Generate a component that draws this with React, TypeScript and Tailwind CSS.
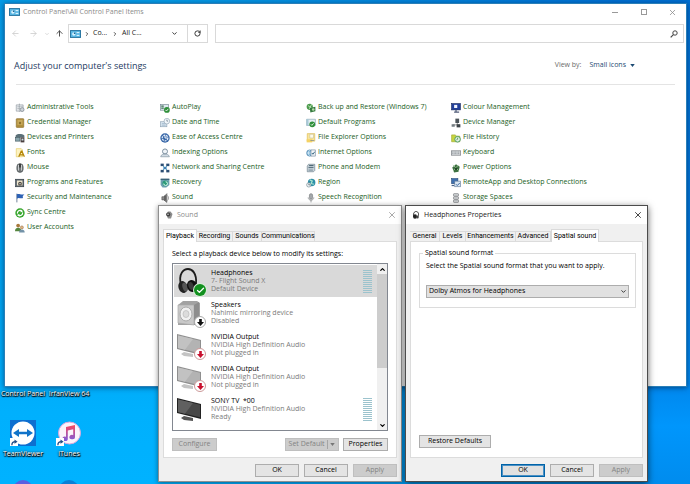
import type { ReactNode } from "react";
import { ArrowLeft, ArrowRight, ArrowUp, Check, ChevronDown, ChevronRight, ChevronUp, RotateCw, X } from "lucide-react";

/* ---------- small icons for the control panel list ---------- */

const G = ({ children }: { children: ReactNode }) => (
  <svg viewBox="0 0 16 16" className="size-[10px] shrink-0" aria-hidden="true">
    {children}
  </svg>
);

const Tick = ({ x = 11, y = 11 }: { x?: number; y?: number }) => (
  <g>
    <circle cx={x} cy={y} r="4.6" fill="#2f8f3a" />
    <path d={`M${x - 2.2} ${y}l1.6 1.8l2.8-3.4`} fill="none" stroke="#fff" strokeWidth="1.3" />
  </g>
);

const icons: Record<string, ReactNode> = {
  admin: (
    <G>
      <path d="M2 3h11v10H2z" fill="#e8ebee" stroke="#8a949c" />
      <path d="M4 6h8M4 9h8M7 1v13" stroke="#7d868d" strokeDasharray="2 1" />
      <circle cx="11.500" cy="10.500" r="3" fill="#cfd5da" stroke="#77818a" />
    </G>
  ),
  credential: (
    <G>
      <rect x="2" y="1" width="12" height="14" rx="1" fill="#b08f3e" stroke="#8b6d26" />
      <rect x="4" y="3" width="8" height="8" fill="#c9ab5d" />
      <circle cx="8" cy="8" r="2" fill="#8e732f" />
    </G>
  ),
  devices: (
    <G>
      <path d="M1 4c3-3 10-3 14 0v3H1z" fill="#5b7078" />
      <rect x="1" y="7" width="7" height="6" fill="#8aa6ad" stroke="#3f555d" />
      <rect x="9" y="7" width="6" height="8" fill="#4a3f3f" />
      <rect x="10.500" y="9" width="3" height="3" fill="#c9dde2" />
    </G>
  ),
  fonts: (
    <G>
      <path d="M2 1h8l2 2v11H2z" fill="#fdf3c1" stroke="#e2c75c" />
      <path d="M6 14l4-9h1l4 9M7.500 11h6" fill="none" stroke="#b48609" strokeWidth="2" />
    </G>
  ),
  mouse: (
    <G>
      <rect x="3" y="1" width="10" height="14" rx="5" fill="#707678" stroke="#43494b" />
      <path d="M5.500 3v9M10.500 3v9" stroke="#d5d9da" strokeWidth="1.500" />
      <path d="M8 1v6" stroke="#222" strokeWidth="2" />
    </G>
  ),
  programs: (
    <G>
      <rect x="1" y="2" width="13" height="12" fill="#55606a" stroke="#2f3940" />
      <rect x="3" y="4" width="9" height="8" fill="#efe7cf" />
      <circle cx="8" cy="9" r="3" fill="#4f4a42" />
      <circle cx="8" cy="9" r="1" fill="#fff" />
    </G>
  ),
  security: (
    <G>
      <path d="M3 1v14" stroke="#6b7d94" strokeWidth="1.500" />
      <path d="M3 2c4-2 6 2 12 0c-3 3-3 4-2 6c-5 2-6-2-10 1z" fill="#2d62b5" />
    </G>
  ),
  sync: (
    <G>
      <circle cx="8" cy="8" r="7.500" fill="#35a52b" />
      <path d="M4 9a4 4 0 0 1 6-4.500M12 7a4 4 0 0 1-6 4.500" fill="none" stroke="#fff" strokeWidth="2" />
      <path d="M9 2l4 3l-4 2zM7 14l-4-3l4-2z" fill="#fff" />
    </G>
  ),
  users: (
    <G>
      <circle cx="5" cy="4" r="3" fill="#a8793c" />
      <path d="M0 13c0-7 10-7 10 0z" fill="#55863f" />
      <circle cx="11" cy="7" r="2.500" fill="#dfb180" stroke="#7a5a35" strokeWidth="0.600" />
      <path d="M6.500 15c0-6 9-6 9 0z" fill="#7392a8" />
    </G>
  ),
  autoplay: (
    <G>
      <rect x="0.500" y="2.500" width="13" height="9" fill="#dfe9ef" stroke="#70838f" />
      <path d="M2 5h4M2 8h4" stroke="#3b6d50" strokeWidth="2" />
      <Tick />
    </G>
  ),
  date: (
    <G>
      <rect x="1" y="6" width="10" height="8" fill="#d6e4ef" stroke="#8aa0b2" />
      <path d="M3 9h6M3 11.500h6" stroke="#8fa9bd" />
      <circle cx="11" cy="5" r="4.500" fill="#f1f6fa" stroke="#8ba1b0" />
      <path d="M11 2.500V5h2" fill="none" stroke="#55697a" />
    </G>
  ),
  ease: (
    <G>
      <circle cx="8" cy="8" r="7.500" fill="#3a68a8" />
      <circle cx="8" cy="8" r="4.500" fill="none" stroke="#e7f0fa" strokeWidth="2" strokeDasharray="3 1.500" />
      <path d="M8 4v4h4" fill="none" stroke="#fff" strokeWidth="1.500" />
    </G>
  ),
  indexing: (
    <G>
      <circle cx="8" cy="5.500" r="4" fill="#eef3f7" stroke="#75899a" strokeWidth="1.500" />
      <path d="M1 14c1-4 4-4 7-4s6 0 7 4z" fill="#d2dce5" stroke="#7a8d9c" />
    </G>
  ),
  network: (
    <G>
      <path d="M4 4l8 8M12 4l-8 8" stroke="#56b1c9" strokeWidth="1.500" />
      <rect x="1" y="1" width="5" height="4" fill="#2b4e74" />
      <rect x="10" y="1" width="5" height="4" fill="#2b4e74" />
      <rect x="5.500" y="6" width="5" height="4" fill="#3d7fb5" />
      <rect x="1" y="11" width="5" height="4" fill="#2b4e74" />
      <rect x="10" y="11" width="5" height="4" fill="#2b4e74" />
    </G>
  ),
  recovery: (
    <G>
      <path d="M1 2h14v9l-5 4H4l-3-4z" fill="#6c9fb0" />
      <circle cx="8.500" cy="8.500" r="4.500" fill="#2b9a77" />
      <path d="M6 9a3 3 0 1 0 3-3" fill="none" stroke="#e3fff5" strokeWidth="1.500" />
      <path d="M1 2h14" stroke="#2c566c" strokeWidth="2" />
    </G>
  ),
  sound: (
    <G>
      <path d="M3 6h3l5-5v14l-5-4H3z" fill="#8d8d8d" stroke="#555" />
      <path d="M12 4c2 2 2 6 0 8" fill="none" stroke="#999" strokeWidth="1.500" />
      <path d="M8 4v8" stroke="#333" strokeWidth="1.500" />
    </G>
  ),
  backup: (
    <G>
      <circle cx="6" cy="6" r="5" fill="#4b9b4b" />
      <path d="M3 4l7 5M9 2l-4 8" stroke="#d5f0d0" strokeWidth="1.200" />
      <path d="M6 8l9-2v7l-8 2z" fill="#367c41" />
      <circle cx="11.500" cy="10.500" r="2" fill="#b4dba8" />
    </G>
  ),
  defaults: (
    <G>
      <path d="M1 2h14v10H1z" fill="#e6eff4" stroke="#7ea0af" />
      <path d="M1 2h3v10H1z" fill="#a7c9d6" />
      <Tick x={10} y={10} />
    </G>
  ),
  explorer: (
    <G>
      <path d="M2 1h12v12H2z" fill="#f9e59a" stroke="#dcb94b" />
      <path d="M6 2h6v6H6z" fill="#fffbe8" stroke="#c9c19a" />
      <path d="M1 10h9v5H1z" fill="#f4d264" />
      <path d="M7 12h6" stroke="#6d8296" />
    </G>
  ),
  internet: (
    <G>
      <circle cx="6" cy="8" r="5" fill="#7fb5d7" stroke="#3d77a3" />
      <path d="M1 8h10M6 3c-3 3-3 7 0 10" stroke="#e9f5fc" fill="none" />
      <path d="M8 3h7v10H8z" fill="#f0f4f7" stroke="#72889a" />
      <path d="M9.500 8l1.500 2l3-4" stroke="#31627f" fill="none" strokeWidth="1.500" />
    </G>
  ),
  phone: (
    <G>
      <path d="M2 5l2-3h10v10l-2 2H2z" fill="#c8d3da" stroke="#687b87" />
      <path d="M5 4h7M4 7h8" stroke="#48626f" strokeWidth="1.500" />
      <path d="M4 10h7M4 12h7" stroke="#7c919d" />
    </G>
  ),
  region: (
    <G>
      <circle cx="9" cy="7" r="6" fill="#2d8fa8" />
      <path d="M6 3l4 2l-2 4l5 1" fill="none" stroke="#a5e2cf" strokeWidth="2" />
      <circle cx="4.500" cy="11" r="3.500" fill="#eff4f6" stroke="#6d828c" />
      <path d="M4.500 9v2h2" fill="none" stroke="#3b4d56" />
    </G>
  ),
  speech: (
    <G>
      <rect x="5.500" y="1" width="5" height="9" rx="2.500" fill="#a4a8ab" stroke="#75797b" />
      <path d="M3.500 7c0 6 9 6 9 0M8 11v4" fill="none" stroke="#8c9092" strokeWidth="1.300" />
    </G>
  ),
  colour: (
    <G>
      <rect x="1" y="1" width="14" height="10" fill="#223f9a" stroke="#14255c" />
      <rect x="5" y="3" width="5" height="5" fill="#f3f6ff" />
      <path d="M8 11v3M5 14.500h8" stroke="#505b78" strokeWidth="2" />
    </G>
  ),
  device: (
    <G>
      <rect x="7" y="1" width="6" height="7" fill="#4c5459" />
      <path d="M10 8v3M3 11h11" stroke="#555" />
      <rect x="1" y="10" width="5" height="4" fill="#737c81" />
      <rect x="9" y="10" width="6" height="5" fill="#3d4448" />
    </G>
  ),
  history: (
    <G>
      <path d="M1 3h6l1 2h6v9H1z" fill="#c7d441" stroke="#9aa72b" />
      <circle cx="10.500" cy="10" r="4.500" fill="#dff0e0" stroke="#489a5d" strokeWidth="1.500" />
      <path d="M10.500 7.500V10l-2 1" fill="none" stroke="#2d6a3e" />
    </G>
  ),
  keyboard: (
    <G>
      <rect x="0.500" y="4.500" width="15" height="7" fill="#dadde0" stroke="#70757a" />
      <path d="M2 6.500h12M2 9h12" stroke="#71767c" strokeDasharray="1.500 0.800" />
    </G>
  ),
  power: (
    <G>
      <path d="M2 7l6-5l6 4l-2 8l-7 1z" fill="#3c7040" />
      <path d="M3 3l9 9M12 3l-8 9" stroke="#a7cfa2" strokeWidth="1.300" />
      <circle cx="8" cy="9" r="2" fill="#1f4424" />
    </G>
  ),
  remote: (
    <G>
      <rect x="1" y="1" width="10" height="8" fill="#3e6fae" stroke="#274a79" />
      <rect x="6" y="5" width="9" height="9" fill="#d8e5f2" stroke="#5d7896" />
      <path d="M8 10l2 2l4-4" fill="none" stroke="#2b5b97" strokeWidth="1.500" />
      <path d="M1 12h4" stroke="#496487" strokeWidth="2" />
    </G>
  ),
  storage: (
    <G>
      <rect x="4" y="1" width="8" height="4" rx="1" fill="#d0d3d5" stroke="#6d7173" />
      <rect x="4" y="6" width="8" height="4" rx="1" fill="#d0d3d5" stroke="#6d7173" />
      <rect x="4" y="11" width="8" height="4" rx="1" fill="#d0d3d5" stroke="#6d7173" />
    </G>
  ),
};

const columns: [string, string][][] = [
  [
    ["admin", "Administrative Tools"],
    ["credential", "Credential Manager"],
    ["devices", "Devices and Printers"],
    ["fonts", "Fonts"],
    ["mouse", "Mouse"],
    ["programs", "Programs and Features"],
    ["security", "Security and Maintenance"],
    ["sync", "Sync Centre"],
    ["users", "User Accounts"],
  ],
  [
    ["autoplay", "AutoPlay"],
    ["date", "Date and Time"],
    ["ease", "Ease of Access Centre"],
    ["indexing", "Indexing Options"],
    ["network", "Network and Sharing Centre"],
    ["recovery", "Recovery"],
    ["sound", "Sound"],
  ],
  [
    ["backup", "Back up and Restore (Windows 7)"],
    ["defaults", "Default Programs"],
    ["explorer", "File Explorer Options"],
    ["internet", "Internet Options"],
    ["phone", "Phone and Modem"],
    ["region", "Region"],
    ["speech", "Speech Recognition"],
  ],
  [
    ["colour", "Colour Management"],
    ["device", "Device Manager"],
    ["history", "File History"],
    ["keyboard", "Keyboard"],
    ["power", "Power Options"],
    ["remote", "RemoteApp and Desktop Connections"],
    ["storage", "Storage Spaces"],
  ],
];

const PanelIcon = () => (
  <svg viewBox="0 0 20 14" className="h-[8px] w-[11px] shrink-0" aria-hidden="true">
    <rect x="0.800" y="0.800" width="18.400" height="12.400" fill="#59b6e3" stroke="#1c6b98" strokeWidth="1.600" />
    <circle cx="7" cy="7" r="3" fill="#d9f2ff" />
    <path d="M7 7V4a3 3 0 0 1 3 3z" fill="#1e6793" />
    <path d="M12 4.500h5M12 9.500h5" stroke="#e8f8ff" strokeWidth="1.800" />
  </svg>
);

/* ---------- control panel window ---------- */

function ControlPanel() {
  return (
    <main className="absolute top-[3px] right-[3px] left-1 flex min-h-[384px] flex-col border border-[#2a7fb8] bg-white shadow-[0_1px_5px_rgba(0,30,70,0.6)]">
      <header className="flex h-4 items-center gap-[3px] pl-1 text-[7px] text-[#8b8b8b]">
        <PanelIcon />
        <h1 className="grow">Control Panel\All Control Panel Items</h1>
        <button aria-label="Minimise" className="flex w-[26px] justify-center">
          <span className="h-px w-1.5 bg-[#999]" />
        </button>
        <button aria-label="Maximise" className="flex w-[25px] justify-center">
          <span className="size-[6px] border border-[#999]" />
        </button>
        <button aria-label="Close" className="flex w-[27px] justify-center text-[#888]">
          <X size={9} strokeWidth={2} />
        </button>
      </header>

      <div className="mt-1 flex h-[19px] items-center pr-[2px] pl-[6px] text-[7px] text-[#222]">
        <button aria-label="Back" className="w-[18px] text-[#c8c8c8]"><ArrowLeft size={9} /></button>
        <button aria-label="Forward" className="w-[15px] text-[#c8c8c8]"><ArrowRight size={9} /></button>
        <button aria-label="Recent" className="w-[11px] text-[#bbb]"><ChevronDown size={6} /></button>
        <button aria-label="Up" className="w-[13px] text-[#444]"><ArrowUp size={9} strokeWidth={2.5} /></button>
        <nav aria-label="Address" className="flex h-full items-center border border-[#d9d9d9]">
          <span className="flex items-center gap-[3px] pl-px">
            <PanelIcon />
            <ChevronRight size={6} strokeWidth={3} />
            <a href="#cp" className="w-[16px]">Co...</a>
            <ChevronRight size={6} strokeWidth={3} />
            <a href="#all" className="w-[50px] pl-px">All C...</a>
          </span>
          <button aria-label="Previous locations" className="w-[16px]"><ChevronDown size={7} strokeWidth={3} /></button>
          <button aria-label="Refresh" className="flex h-full w-[20px] items-center justify-center border-l border-[#d9d9d9]">
            <RotateCw size={7} strokeWidth={3} />
          </button>
        </nav>
        <label className="ml-[7px] flex h-full grow items-center border border-[#d9d9d9] pr-[5px]">
          <input aria-label="Search Control Panel" className="h-full w-0 grow px-1 outline-none" />
          <svg viewBox="0 0 8 8" className="size-[8px]" aria-hidden="true">
            <circle cx="5" cy="3" r="2.200" fill="none" stroke="#444" />
            <path d="M3.400 4.600L0.700 7.300" stroke="#444" strokeWidth="1.200" />
          </svg>
        </label>
      </div>

      <div className="flex h-[41px] items-center pt-1 pr-[51px] pl-[9px]">
        <h2 className="grow text-[9px] text-[#1e3a5f]">Adjust your computer's settings</h2>
        <span className="text-[7px] text-[#6b6b6b]">View by:</span>
        <button className="ml-2 flex items-center gap-1 text-[7px] text-[#1c4a73]">
          Small icons
          <svg viewBox="0 0 6 4" className="h-[3px] w-[5px]" aria-hidden="true"><path d="M0 0h6L3 4z" fill="#1c4a73" /></svg>
        </button>
      </div>
      <hr className="mx-[11px] border-[#e4e4e4]" />

      <div className="mt-[15px] grid grid-cols-[145px_146px_145px_1fr] pl-[10px]">
        {columns.map((col) => (
          <ul key={col[0][0]}>
            {col.map(([icon, label]) => (
              <li key={icon} className="h-[15px]">
                <a href={`#${icon}`} className="flex h-full items-center gap-[2px] text-[7px] whitespace-nowrap text-[#1b6025]">
                  {icons[icon]}
                  {label}
                </a>
              </li>
            ))}
          </ul>
        ))}
      </div>
    </main>
  );
}

/* ---------- shared dialog parts ---------- */

function Button({ children, className = "", disabled = false, primary = false }: { children: ReactNode; className?: string; disabled?: boolean; primary?: boolean }) {
  const tone = disabled
    ? "border-[#bfbfbf] bg-[#cccccc] text-[#838383]"
    : primary
      ? "border-[#0063a8] bg-[#e1e1e1] text-black ring-1 ring-inset ring-[#4a90c4]"
      : "border-[#adadad] bg-[#e4e4e4] text-black";
  return (
    <button disabled={disabled} className={`flex h-[13px] items-center justify-center border text-[7px] ${tone} ${className}`}>
      {children}
    </button>
  );
}

function Dialog({ title, icon, inactive = false, tabs, active, className, footer, children }: {
  title: string; icon: ReactNode; inactive?: boolean; tabs: [string, string][]; active: string; className: string; footer: ReactNode; children: ReactNode;
}) {
  return (
    <section aria-label={title} className={`absolute top-[205px] flex flex-col border bg-[#f0f0f0] text-[7px] text-black ${className}`}>
      <header className="flex h-[18px] items-center gap-1 bg-white pr-[4px] pl-[6px]">
        {icon}
        <h2 className={inactive ? "grow text-[#8c8c8c]" : "grow text-[#222]"}>{title}</h2>
        <button aria-label="Close" className={inactive ? "text-[#999]" : "text-[#222]"}><X size={10} strokeWidth={2} /></button>
      </header>
      <div role="tablist" className="mt-[5px] flex h-[12px] items-end pl-[4px] font-['Roboto','Open_Sans',sans-serif]">
        {tabs.map(([name, width]) => (
          <button
            key={name}
            role="tab"
            aria-selected={name === active}
            className={`${width} flex shrink-0 justify-center whitespace-nowrap border-[#dadada] ${name === active ? "relative -mb-px h-[13px] items-center border-x border-t bg-white" : "h-[10px] items-center border-t border-r"}`}
          >
            {name}
          </button>
        ))}
      </div>
      <div className="mx-[4px] flex h-[217px] flex-col border border-[#dcdcdc] bg-white">{children}</div>
      <div className="mt-[6px] flex justify-end gap-[5px] pr-[4px] pb-[4px]">{footer}</div>
    </section>
  );
}

/* ---------- sound dialog ---------- */

const Headphones = () => (
  <svg viewBox="0 0 26 28" className="h-[28px] w-[26px]" aria-hidden="true">
    <path d="M4 18C1 6 7 2 11 2s9 4 8 15" fill="none" stroke="#1d1d1d" strokeWidth="1.800" />
    <ellipse cx="6" cy="20" rx="4.500" ry="6" fill="#232323" transform="rotate(-18 6 20)" />
    <ellipse cx="8" cy="20" rx="2.500" ry="4.500" fill="#555" transform="rotate(-18 8 20)" />
    <ellipse cx="15" cy="19" rx="5" ry="6" fill="#111" transform="rotate(-18 15 19)" />
    <ellipse cx="14" cy="19" rx="2.500" ry="4" fill="#3a3a3a" transform="rotate(-18 14 19)" />
  </svg>
);

const Speaker = () => (
  <svg viewBox="0 0 26 28" className="h-[28px] w-[26px]" aria-hidden="true">
    <path d="M1 6l5-4h14l3 2v18l-5 4H1z" fill="#a2a2a2" />
    <path d="M1 6h16v20L1 24z" fill="#c9c9c9" stroke="#aaa" strokeWidth="0.700" />
    <path d="M17 6l5-3v20l-5 3z" fill="#8d8d8d" />
    <ellipse cx="9" cy="15" rx="6" ry="7" fill="#f1f1f1" stroke="#aaa" />
    <ellipse cx="9" cy="15" rx="3" ry="3.500" fill="#dcdcdc" stroke="#bbb" strokeWidth="0.700" />
  </svg>
);

const Monitor = ({ dark = false }: { dark?: boolean }) => (
  <svg viewBox="0 0 26 28" className="h-[28px] w-[26px]" aria-hidden="true">
    <path d="M7 21l9 2v3l-9-1l-3-2z" fill={dark ? "#555" : "#c4c4c4"} />
    <path d="M0 3l24 6v15L0 18z" fill={dark ? "#222" : "#8f8f8f"} />
    <path d="M1 4.500l22 5.300v12.500L1 17z" fill={dark ? "#484848" : "#b3b3b3"} />
    <path d="M1 4.500l15 3.500L8 18.700L1 17z" fill={dark ? "#606060" : "#c2c2c2"} />
  </svg>
);

const Badge = ({ kind }: { kind: "ok" | "off" | "unplugged" }) =>
  kind === "ok" ? (
    <span className="absolute right-[-3px] bottom-[-1px] flex size-[12px] items-center justify-center rounded-full bg-[#12901f] text-white ring-1 ring-[#d8ecd8]">
      <Check size={9} strokeWidth={3.5} />
    </span>
  ) : (
    <span className={`absolute right-[-3px] bottom-[-1px] flex size-[12px] items-center justify-center rounded-full border bg-white ${kind === "off" ? "border-[#aaa] text-[#111]" : "border-[#c99] text-[#c8102e]"}`}>
      <svg viewBox="0 0 8 8" className="size-[7px]" aria-hidden="true"><path d="M2.500 0h3v3.500H8L4 8L0 3.500h2.500z" fill="currentColor" /></svg>
    </span>
  );

const Meter = () => (
  <span className="flex w-[9px] flex-col gap-px" aria-hidden="true">
    {Array.from({ length: 12 }, (_, i) => (
      <span key={i} className="h-px bg-[#9cc3cd]" />
    ))}
  </span>
);

const devices: { name: string; desc: string; state: string; art: ReactNode; badge?: "ok" | "off" | "unplugged"; meter?: boolean }[] = [
  { name: "Headphones", desc: "7- Flight Sound X", state: "Default Device", art: <Headphones />, badge: "ok", meter: true },
  { name: "Speakers", desc: "Nahimic mirroring device", state: "Disabled", art: <Speaker />, badge: "off" },
  { name: "NVIDIA Output", desc: "NVIDIA High Definition Audio", state: "Not plugged in", art: <Monitor />, badge: "unplugged" },
  { name: "NVIDIA Output", desc: "NVIDIA High Definition Audio", state: "Not plugged in", art: <Monitor />, badge: "unplugged" },
  { name: "SONY TV  *00", desc: "NVIDIA High Definition Audio", state: "Ready", art: <Monitor dark />, meter: true },
];

function SoundDialog() {
  return (
    <Dialog
      title="Sound"
      inactive
      className="left-[158px] w-[244px] border-[#8f8f8f] shadow-[0_1px_5px_rgba(0,0,0,0.45)]"
      icon={
        <svg viewBox="0 0 16 16" className="size-[8px]" aria-hidden="true">
          <path d="M2 6l4-5h5l4 5l-3 9H6z" fill="#8b8b8b" />
          <circle cx="6.500" cy="7" r="4" fill="#3f3f3f" />
          <circle cx="6" cy="6.500" r="1.500" fill="#ddd" />
        </svg>
      }
      tabs={[["Playback", "w-[34px]"], ["Recording", "w-[36px]"], ["Sounds", "w-[29px]"], ["Communications", "w-[53px]"]]}
      active="Playback"
      footer={
        <>
          <Button className="w-[44px]">OK</Button>
          <Button className="w-[44px]">Cancel</Button>
          <Button className="w-[44px]" disabled>Apply</Button>
        </>
      }
    >
      <p className="mt-[7px] ml-[8px] leading-[10px]">Select a playback device below to modify its settings:</p>
      <div className="mx-[8px] mt-[4px] flex h-[168px] border border-[#828790]">
        <ul className="flex grow flex-col pt-px pl-px">
          {devices.map((d, i) => (
            <li key={i} className={`flex h-[32px] items-center pr-[5px] ${i === 0 ? "bg-[#d9d9d9]" : ""}`}>
              <span className="relative ml-[3px]">
                {d.art}
                {d.badge && <Badge kind={d.badge} />}
              </span>
              <span className="ml-[8px] grow leading-[8px] whitespace-pre">
                <span className="block">{d.name}</span>
                <span className="block text-[#7b7b7b]">{d.desc}</span>
                <span className="block text-[#7b7b7b]">{d.state}</span>
              </span>
              {d.meter && <Meter />}
            </li>
          ))}
        </ul>
        <div className="flex w-[10px] flex-col items-center bg-[#f0f0f0]">
          <button aria-label="Scroll up" className="flex h-[10px] items-center"><ChevronUp size={7} strokeWidth={4} /></button>
          <span className="h-[94px] w-full bg-[#cdcdcd]" />
          <button aria-label="Scroll down" className="mt-auto flex h-[10px] items-center"><ChevronDown size={7} strokeWidth={4} /></button>
        </div>
      </div>
      <div className="mt-[7px] flex px-[8px]">
        <Button className="w-[45px]" disabled>Configure</Button>
        <Button className="ml-auto w-[54px] gap-[3px]" disabled>
          Set Default
          <span className="flex h-[9px] items-center border-l border-[#a5a5a5] pl-[2px]">
            <svg viewBox="0 0 6 4" className="h-[3px] w-[5px]" aria-hidden="true"><path d="M0 0h6L3 4z" fill="#777" /></svg>
          </span>
        </Button>
        <Button className="ml-[4px] w-[45px]">Properties</Button>
      </div>
    </Dialog>
  );
}

/* ---------- headphones properties dialog ---------- */

function PropertiesDialog() {
  return (
    <Dialog
      title="Headphones Properties"
      className="left-[405px] w-[243px] border-[#4c4c4c] shadow-[0_2px_7px_rgba(0,0,0,0.6)]"
      icon={
        <svg viewBox="0 0 16 16" className="size-[8px]" aria-hidden="true">
          <path d="M4 12C1 5 5 1 8 1s7 3 4 10" fill="none" stroke="#222" strokeWidth="1.800" />
          <ellipse cx="6" cy="11" rx="4" ry="4.500" fill="#222" />
          <ellipse cx="11" cy="12" rx="2.500" ry="3" fill="#444" />
        </svg>
      }
      tabs={[["General", "w-[30px]"], ["Levels", "w-[26px]"], ["Enhancements", "w-[50px]"], ["Advanced", "w-[35px]"], ["Spatial sound", "w-[48px]"]]}
      active="Spatial sound"
      footer={
        <>
          <Button className="w-[44px]" primary>OK</Button>
          <Button className="w-[44px]">Cancel</Button>
          <Button className="w-[44px]" disabled>Apply</Button>
        </>
      }
    >
      <fieldset className="mr-[6px] ml-[8px] mt-[6px] h-[60px] border border-[#dcdcdc] px-[6px]">
        <legend className="-ml-[3px] px-[2px] leading-[10px]">Spatial sound format</legend>
        <label htmlFor="format" className="mt-[3px] block leading-[10px]">Select the Spatial sound format that you want to apply.</label>
        <div className="relative mt-[14px]">
          <select id="format" className="block h-[13px] w-full appearance-none border border-[#adadad] bg-[#e1e1e1] pl-[2px]">
            <option>Dolby Atmos for Headphones</option>
          </select>
          <ChevronDown size={7} strokeWidth={2.5} className="pointer-events-none absolute top-[3px] right-[2px]" />
        </div>
      </fieldset>
      <div className="mt-auto mb-[9px] ml-[8px]">
        <Button className="w-[72px]">Restore Defaults</Button>
      </div>
    </Dialog>
  );
}

/* ---------- desktop ---------- */

const Shortcut = () => (
  <span className="absolute bottom-0 left-0 flex size-[8px] items-center justify-center bg-white">
    <svg viewBox="0 0 8 8" className="size-[7px]" aria-hidden="true">
      <path d="M1 7c0-3 1-4 4-4" fill="none" stroke="#224c86" strokeWidth="1.500" />
      <path d="M4 0.500L7.500 3L4 5.500z" fill="#224c86" />
    </svg>
  </span>
);

const shadowText = "text-[7px] leading-[10px] whitespace-nowrap text-white [text-shadow:0_1px_1px_#000,0_0_2px_#000,1px_1px_1px_#000]";

export default function App() {
  return (
    <div className="relative h-screen overflow-hidden bg-[linear-gradient(180deg,#069be6_0%,#00a2ee_60%,#00b0fd_85%,#00b2ff_100%)] font-['Open_Sans','Noto_Sans',sans-serif]">
      <div className="absolute inset-y-0 right-0 w-3/4 bg-[linear-gradient(180deg,#0070d2_0%,#0076da_50%,#0088ee_80%,#0096fc_88%,#008cee_100%)] [mask-image:linear-gradient(90deg,transparent,#000_85%)]" />

      <div className="absolute top-[389px] left-0 grid grid-cols-[46px_46px] justify-items-center">
        <span className={shadowText}>Control Panel</span>
        <span className={shadowText}>IrfanView 64</span>
        <a href="#teamviewer" className="mt-[21px] flex flex-col items-center gap-[3px]">
          <span className="relative">
            <svg viewBox="0 0 26 26" className="size-[26px]" aria-hidden="true">
              <rect width="26" height="26" fill="#0d6fd0" />
              <circle cx="13" cy="13" r="11.500" fill="#fff" />
              <path d="M3 13l6-4v2.800h8V9l6 4l-6 4v-2.800H9V17z" fill="#1173c9" />
            </svg>
            <Shortcut />
          </span>
          <span className={shadowText}>TeamViewer</span>
        </a>
        <a href="#itunes" className="mt-[21px] flex flex-col items-center gap-[3px]">
          <span className="relative">
            <svg viewBox="0 0 26 26" className="size-[26px]" aria-hidden="true">
              <defs>
                <linearGradient id="note" x1="0" y1="0" x2="0" y2="1">
                  <stop offset="0" stopColor="#f8485e" />
                  <stop offset="1" stopColor="#7a5be0" />
                </linearGradient>
              </defs>
              <circle cx="13.500" cy="13" r="11" fill="#fbf3fa" stroke="#d9a6dc" />
              <path d="M10 7l9-2v12a2.800 2.200 0 1 1-1.800-2V9.300l-5.400 1.200v8.300a2.800 2.200 0 1 1-1.800-2z" fill="url(#note)" />
            </svg>
            <Shortcut />
          </span>
          <span className={shadowText}>iTunes</span>
        </a>
        <span className="mt-[21px] size-[20px] rounded-full bg-[#5a5fe0]" />
        <span className="mt-[21px] size-[20px] rounded-full bg-[#0a7fd6]" />
      </div>

      <ControlPanel />
      <SoundDialog />
      <PropertiesDialog />
    </div>
  );
}
